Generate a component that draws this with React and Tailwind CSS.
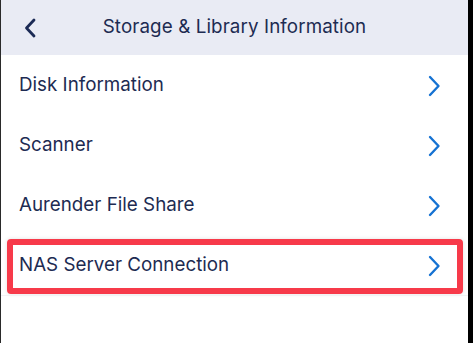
import React from "react";

const Chevron = () => (
  <svg width="14" height="22" viewBox="0 0 14 22" fill="none" className="shrink-0">
    <path d="M3 2 L11.5 11 L3 20" stroke="#1672d2" strokeWidth="2.4" strokeLinecap="round" strokeLinejoin="round" />
  </svg>
);

const rows = ["Disk Information", "Scanner", "Aurender File Share"];

export default function App() {
  return (
    <div
      className="w-[473px] h-[343px] overflow-hidden bg-white border-l border-l-[#2a2a2a] border-r-[5px] border-r-black flex flex-col"
      style={{ fontFamily: 'Inter, "Noto Sans", sans-serif' }}
    >
      <div className="h-[55px] shrink-0 bg-[#e9ebf4] relative flex items-center justify-center">
        <div className="absolute left-[22px] top-[17px]">
          <svg width="16" height="22" viewBox="0 0 16 22" fill="none">
            <path d="M11 3 L3.5 11 L11 19" stroke="#1b2a55" strokeWidth="2.8" strokeLinecap="round" strokeLinejoin="round" />
          </svg>
        </div>
        <span className="text-[18.8px] text-[#1d2b52] tracking-[0.1px]">Storage &amp; Library Information</span>
      </div>
      {rows.map((r) => (
        <div key={r} className="h-[60px] shrink-0 flex items-center justify-between pl-[18px] pr-[27px] pt-[1px]">
          <span className="text-[18.8px] text-[#1d2b52]">{r}</span>
          <Chevron />
        </div>
      ))}
      <div className="h-[60px] shrink-0 pl-[6px] pr-[5px] pt-[4px] pb-[1px]">
        <div className="h-full border-[6px] border-[#f73a4a] rounded-[4px] shadow-[0_0_4px_rgba(0,0,0,0.12)] flex items-center justify-between pl-[6px] pr-[16px] pb-[2px]">
          <span className="text-[18.8px] text-[#1d2b52]">NAS Server Connection</span>
          <Chevron />
        </div>
      </div>
      <div className="flex-1 border-t border-[#f2f2f4]" />
    </div>
  );
}
